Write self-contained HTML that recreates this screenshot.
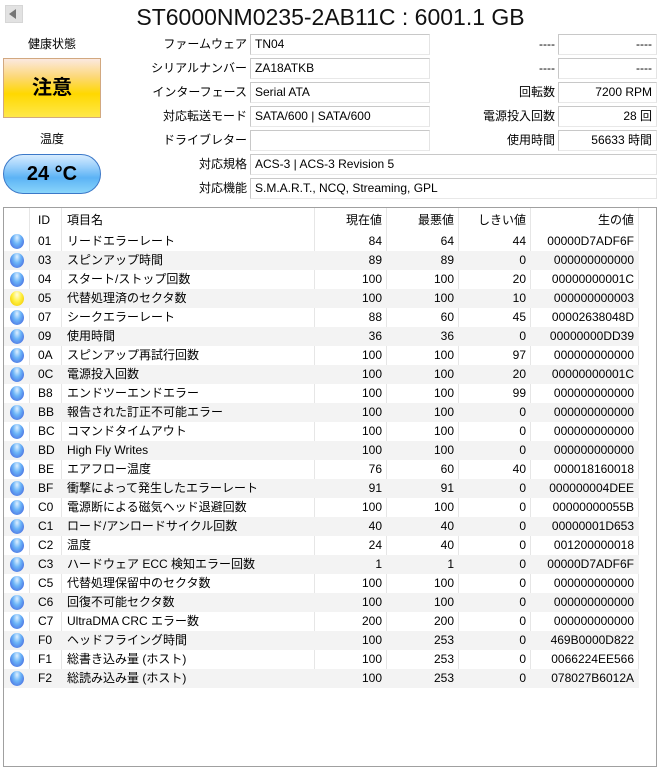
<!DOCTYPE html>
<html><head><meta charset="utf-8"><style>
*{margin:0;padding:0;box-sizing:border-box}
body{width:659px;height:765px;background:#fff;font-family:"Liberation Sans","Noto Sans CJK JP",sans-serif;font-size:12px;color:#000;position:relative;overflow:hidden}
.a{position:absolute;white-space:nowrap}
.lbl{position:absolute;text-align:right;line-height:20px;height:20px}
.box{position:absolute;height:21px;border:1px solid #c8c8c8;border-right-color:#e4e4e4;border-bottom-color:#e8e8e8;line-height:19px;padding:0 4px;background:#fff}
.r{text-align:right}
#tbl{position:absolute;left:3px;top:207px;width:654px;height:560px;border:1px solid #a0a0a0}
.row{position:absolute;left:0;width:635px;height:19px;line-height:19px}
.row.s{background:#f3f3f3}
.row div,.hd div{position:absolute;top:0}
.hd{position:absolute;left:0;top:0;width:650px;height:24px;line-height:24px}
.vl{position:absolute;top:0;width:1px;height:471px;background:#e6e6e6}
.dot{width:14px;height:15px;border-radius:50%;top:2px!important;left:6px;background:radial-gradient(ellipse at 50% 25%,#e0f0ff 0,#6ab4f8 40%,#4a6ee0 85%,#6a5cd0 100%)}
.dot.y{background:radial-gradient(ellipse at 50% 25%,#fffce0 0,#fff040 45%,#f0c800 90%,#d8a800 100%)}
</style></head><body>
<div class="a" style="left:5px;top:5px;width:18px;height:18px;background:#e2e2e2;border:1px solid #d6d6d6"></div>
<div class="a" style="left:9px;top:9px;width:0;height:0;border-top:5px solid transparent;border-bottom:5px solid transparent;border-right:7px solid #777"></div>
<div class="a" style="left:0;width:659px;text-align:center;top:3px;font-size:23px;line-height:28px;padding-left:2px;color:#111">ST6000NM0235-2AB11C : 6001.1 GB</div>

<div class="a" style="left:3px;width:98px;text-align:center;top:35px;line-height:18px">健康状態</div>
<div class="a" style="left:3px;top:58px;width:98px;height:60px;border:1px solid #d2a880;background:linear-gradient(#fbe9e0 0%,#fcd87a 30%,#ffd800 60%,#ffe84a 100%);text-align:center;line-height:58px;font-size:20px;font-weight:bold">注意</div>
<div class="a" style="left:3px;width:98px;text-align:center;top:130px;line-height:18px">温度</div>
<div class="a" style="left:3px;top:154px;width:98px;height:40px;border-radius:20px;border:1px solid #3b78c8;background:linear-gradient(#d7ecff 0%,#9cd0fb 30%,#5cb3f5 60%,#8ad5fb 100%);text-align:center;line-height:38px;font-size:20px;font-weight:bold">24 °C</div>

<div class="lbl" style="left:150px;width:97px;top:34px">ファームウェア</div>
<div class="box" style="left:250px;top:34px;width:180px">TN04</div>
<div class="lbl" style="left:150px;width:97px;top:58px">シリアルナンバー</div>
<div class="box" style="left:250px;top:58px;width:180px">ZA18ATKB</div>
<div class="lbl" style="left:150px;width:97px;top:82px">インターフェース</div>
<div class="box" style="left:250px;top:82px;width:180px">Serial ATA</div>
<div class="lbl" style="left:140px;width:107px;top:106px">対応転送モード</div>
<div class="box" style="left:250px;top:106px;width:180px">SATA/600 | SATA/600</div>
<div class="lbl" style="left:150px;width:97px;top:130px">ドライブレター</div>
<div class="box" style="left:250px;top:130px;width:180px"></div>
<div class="lbl" style="left:150px;width:97px;top:154px">対応規格</div>
<div class="box" style="left:250px;top:154px;width:407px">ACS-3 | ACS-3 Revision 5</div>
<div class="lbl" style="left:150px;width:97px;top:178px">対応機能</div>
<div class="box" style="left:250px;top:178px;width:407px">S.M.A.R.T., NCQ, Streaming, GPL</div>

<div class="lbl" style="left:450px;width:105px;top:34px">----</div>
<div class="box r" style="left:558px;top:34px;width:99px">----</div>
<div class="lbl" style="left:450px;width:105px;top:58px">----</div>
<div class="box r" style="left:558px;top:58px;width:99px">----</div>
<div class="lbl" style="left:450px;width:105px;top:82px">回転数</div>
<div class="box r" style="left:558px;top:82px;width:99px">7200 RPM</div>
<div class="lbl" style="left:450px;width:105px;top:106px">電源投入回数</div>
<div class="box r" style="left:558px;top:106px;width:99px">28 回</div>
<div class="lbl" style="left:450px;width:105px;top:130px">使用時間</div>
<div class="box r" style="left:558px;top:130px;width:99px">56633 時間</div>

<div id="tbl">
<div class="vl" style="left:25px"></div><div class="vl" style="left:57px"></div><div class="vl" style="left:310px"></div><div class="vl" style="left:382px"></div><div class="vl" style="left:454px"></div><div class="vl" style="left:526px"></div><div class="vl" style="left:634px"></div>
<div class="hd"><div style="left:34px">ID</div><div style="left:63px">項目名</div><div style="left:310px;width:68px;text-align:right">現在値</div><div style="left:382px;width:68px;text-align:right">最悪値</div><div style="left:454px;width:68px;text-align:right">しきい値</div><div style="left:526px;width:104px;text-align:right">生の値</div></div>
<div id="rows"></div>
</div>
<script>
var d=[["01","リードエラーレート",84,64,44,"00000D7ADF6F"],["03","スピンアップ時間",89,89,0,"000000000000"],["04","スタート/ストップ回数",100,100,20,"00000000001C"],["05","代替処理済のセクタ数",100,100,10,"000000000003",1],["07","シークエラーレート",88,60,45,"00002638048D"],["09","使用時間",36,36,0,"00000000DD39"],["0A","スピンアップ再試行回数",100,100,97,"000000000000"],["0C","電源投入回数",100,100,20,"00000000001C"],["B8","エンドツーエンドエラー",100,100,99,"000000000000"],["BB","報告された訂正不可能エラー",100,100,0,"000000000000"],["BC","コマンドタイムアウト",100,100,0,"000000000000"],["BD","High Fly Writes",100,100,0,"000000000000"],["BE","エアフロー温度",76,60,40,"000018160018"],["BF","衝撃によって発生したエラーレート",91,91,0,"000000004DEE"],["C0","電源断による磁気ヘッド退避回数",100,100,0,"00000000055B"],["C1","ロード/アンロードサイクル回数",40,40,0,"00000001D653"],["C2","温度",24,40,0,"001200000018"],["C3","ハードウェア ECC 検知エラー回数",1,1,0,"00000D7ADF6F"],["C5","代替処理保留中のセクタ数",100,100,0,"000000000000"],["C6","回復不可能セクタ数",100,100,0,"000000000000"],["C7","UltraDMA CRC エラー数",200,200,0,"000000000000"],["F0","ヘッドフライング時間",100,253,0,"469B0000D822"],["F1","総書き込み量 (ホスト)",100,253,0,"0066224EE566"],["F2","総読み込み量 (ホスト)",100,253,0,"078027B6012A"]];
var h="";d.forEach(function(r,i){h+='<div class="row'+(i%2?' s':'')+'" style="top:'+(24+i*19)+'px"><div class="dot'+(r[6]?' y':'')+'"></div><div style="left:34px">'+r[0]+'</div><div style="left:63px">'+r[1]+'</div><div style="left:310px;width:68px;text-align:right">'+r[2]+'</div><div style="left:382px;width:68px;text-align:right">'+r[3]+'</div><div style="left:454px;width:68px;text-align:right">'+r[4]+'</div><div style="left:526px;width:104px;text-align:right">'+r[5]+'</div></div>';});
document.getElementById("rows").innerHTML=h;
</script>
</body></html>
